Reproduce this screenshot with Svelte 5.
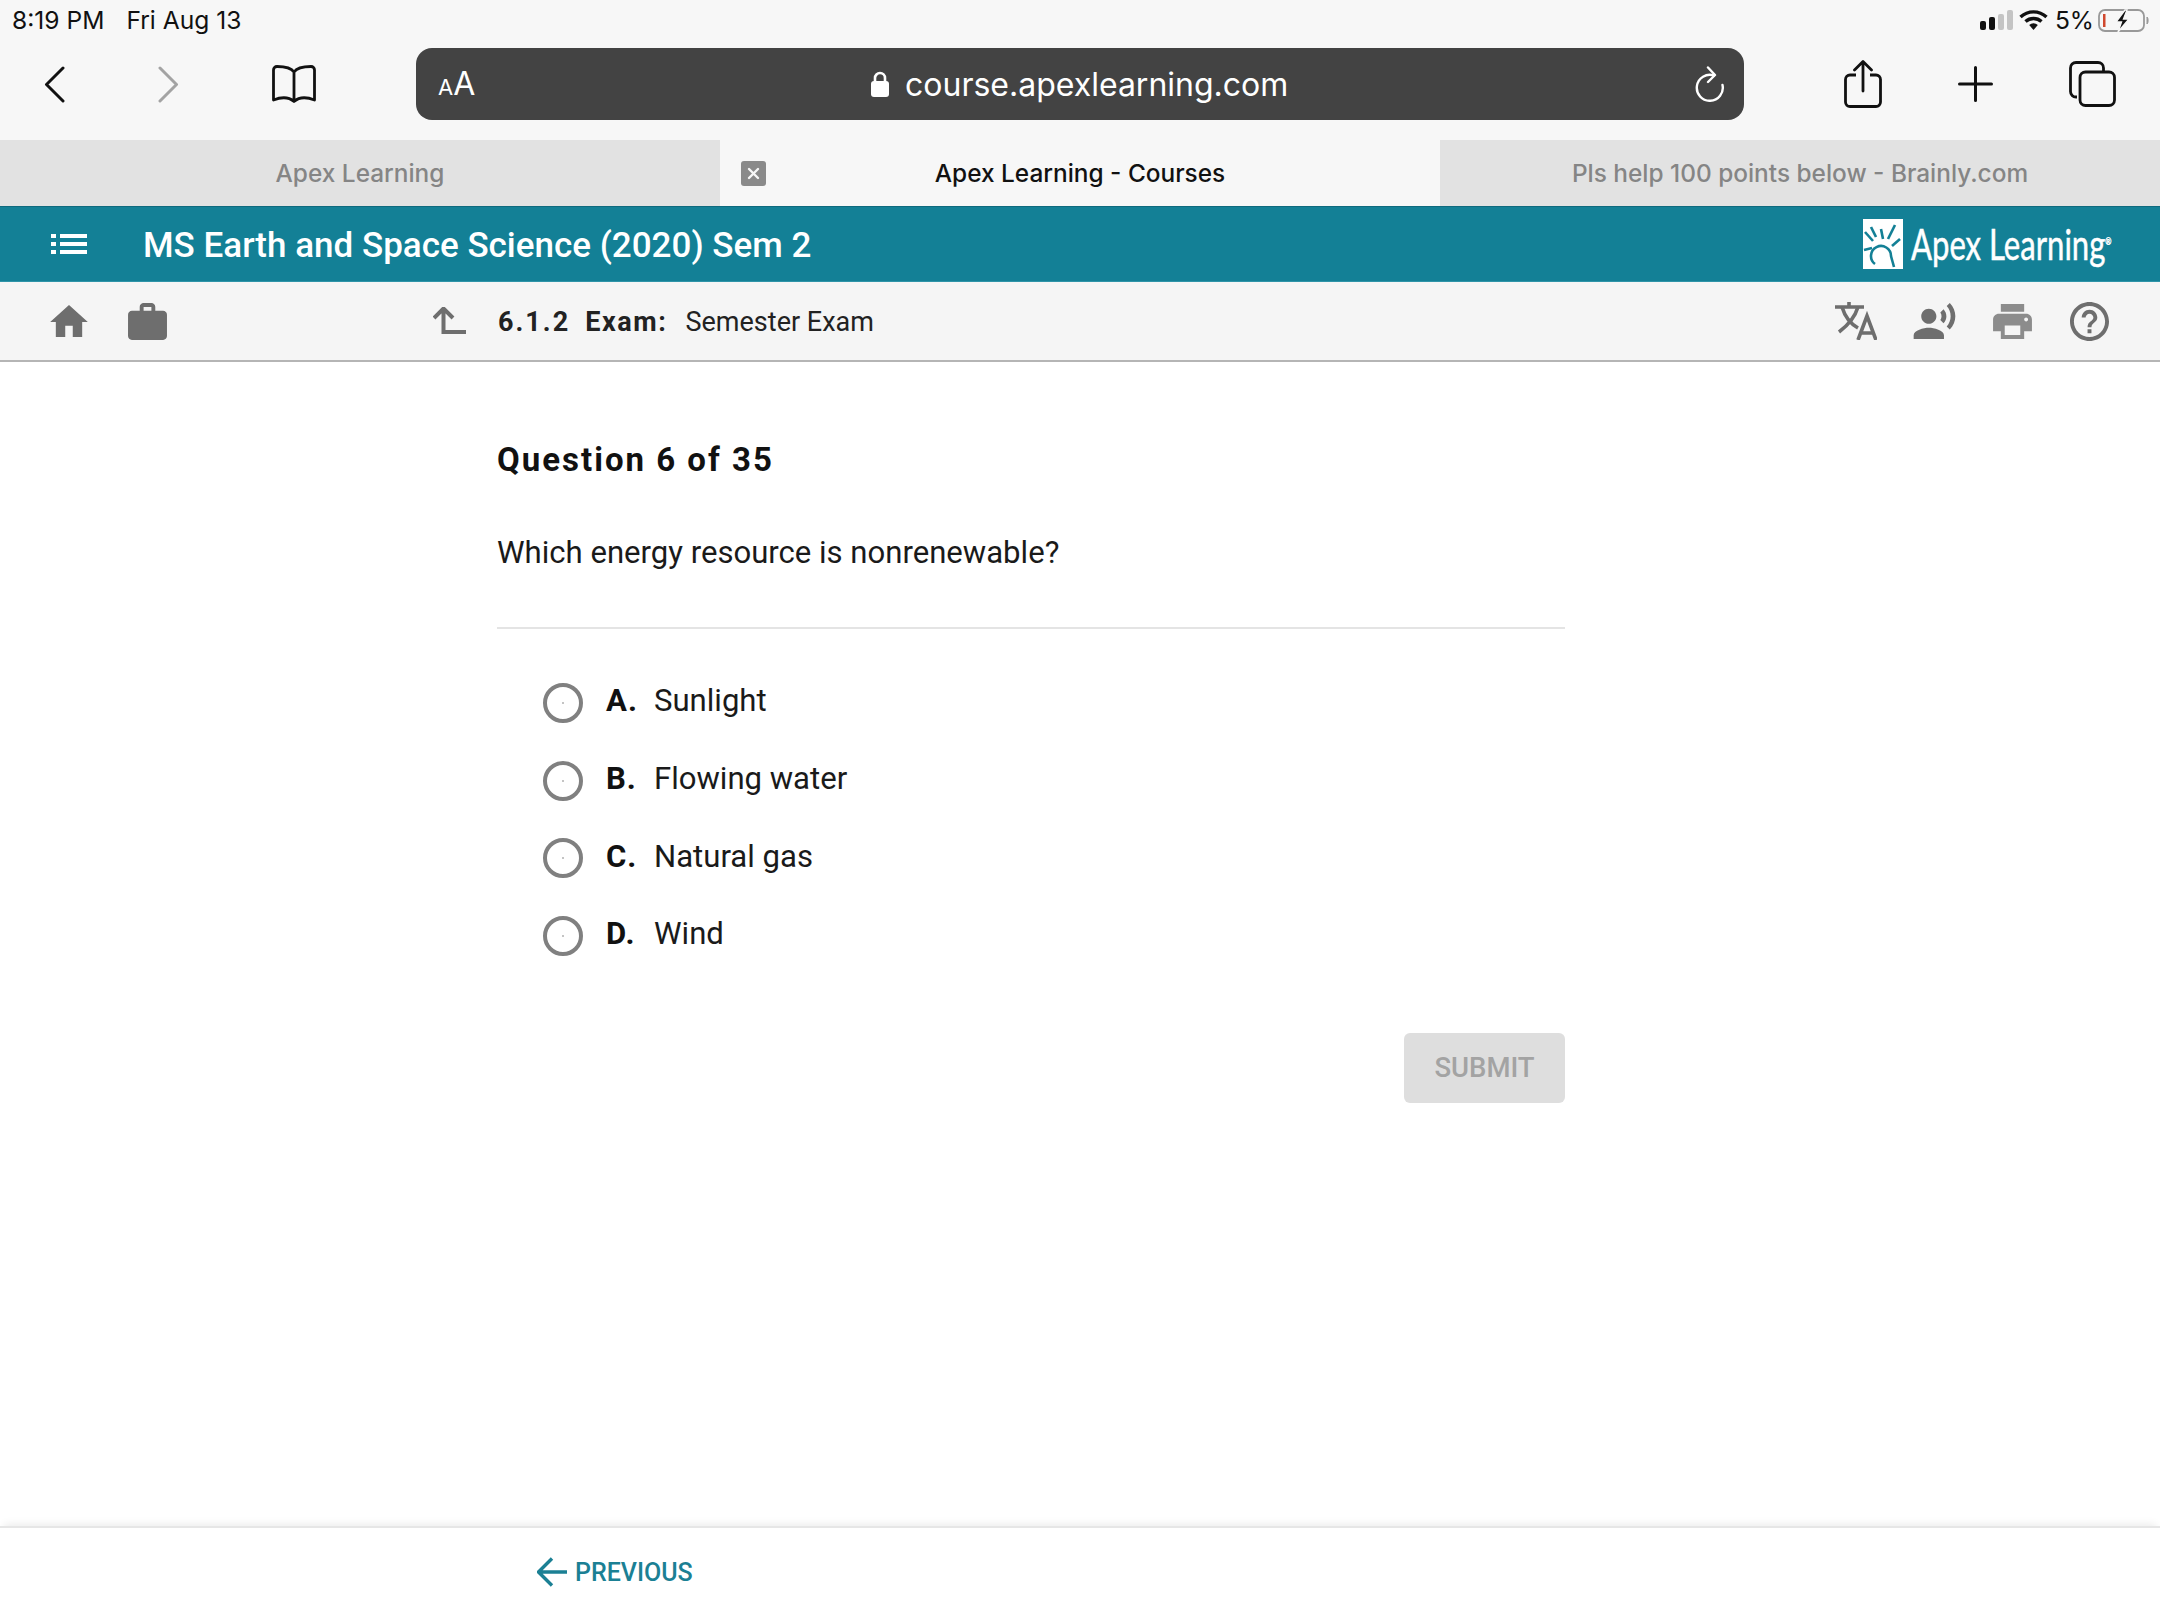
<script>
    const options = [
        { key: "A.", text: "Sunlight" },
        { key: "B.", text: "Flowing water" },
        { key: "C.", text: "Natural gas" },
        { key: "D.", text: "Wind" }
    ]
</script>

<div class="page">
    <div class="status">
        <span class="time">8:19 PM</span>
        <span class="date">Fri Aug 13</span>
        <svg class="signal" viewBox="0 0 33 20" width="33" height="20" aria-hidden="true">
            <rect x="0" y="11" width="6" height="9" rx="2" fill="#111" />
            <rect x="9" y="7" width="6" height="13" rx="2" fill="#111" />
            <rect x="18" y="4" width="6" height="16" rx="2" fill="#c4c4c4" />
            <rect x="27" y="0" width="6" height="20" rx="2" fill="#c4c4c4" />
        </svg>
        <svg class="wifi" viewBox="0 0 29 20" width="29" height="20" aria-hidden="true">
            <path d="M1.5 7 A19 19 0 0 1 27.5 7" fill="none" stroke="#111" stroke-width="3.4" />
            <path d="M6.5 11.5 A12 12 0 0 1 22.5 11.5" fill="none" stroke="#111" stroke-width="3.4" />
            <path d="M10.2 15 L14.5 20 L18.8 15 A6 6 0 0 0 10.2 15 Z" fill="#111" />
        </svg>
        <span class="pct">5%</span>
        <svg class="battery" viewBox="0 0 51 23" width="51" height="23" aria-hidden="true">
            <rect x="1" y="1" width="45" height="21" rx="6" fill="none" stroke="#999" stroke-width="1.8" />
            <rect x="5" y="5" width="2.5" height="13" fill="#d0492f" />
            <path d="M49 8 C50.5 9 50.5 14 49 15 Z" fill="#999" stroke="#999" />
            <path d="M27 1 L18 13 L23.5 13 L20 23 L31 10 L25.5 10 L29 1 Z" fill="#111" stroke="#f7f7f7" stroke-width="1.4" />
        </svg>
    </div>

    <div class="toolbar">
        <svg class="back" viewBox="0 0 21 37" width="21" height="37" aria-hidden="true">
            <path d="M19 2 L2.5 18.5 L19 35" fill="none" stroke="#111" stroke-width="3" stroke-linecap="round" stroke-linejoin="round" />
        </svg>
        <svg class="forward" viewBox="0 0 21 37" width="21" height="37" aria-hidden="true">
            <path d="M2 2 L18.5 18.5 L2 35" fill="none" stroke="#a3a3a3" stroke-width="3" stroke-linecap="round" stroke-linejoin="round" />
        </svg>
        <svg class="book" viewBox="0 0 44 38" width="44" height="38" aria-hidden="true">
            <path d="M22 7 C19 2.5 13 1.5 5 1.5 C3 1.5 1.5 3 1.5 5 L1.5 35 C9 32 17 32 22 36.5 C27 32 35 32 42.5 35 L42.5 5 C42.5 3 41 1.5 39 1.5 C31 1.5 25 2.5 22 7 Z M22 7 L22 36" fill="none" stroke="#111" stroke-width="2.8" stroke-linejoin="round" />
        </svg>
        <div class="url">
            <span class="aa"><span class="aa-small">A</span>A</span>
            <svg class="lock" viewBox="0 0 18 26" width="18" height="26" aria-hidden="true">
                <path d="M4 11 V7 A5 5 0 0 1 14 7 V11" fill="none" stroke="#fff" stroke-width="2.6" />
                <rect x="0" y="10" width="18" height="16" rx="3" fill="#fff" />
            </svg>
            <span class="host">course.apexlearning.com</span>
            <svg class="reload" viewBox="0 0 30 36" width="30" height="36" aria-hidden="true">
                <path d="M19 9.5 A13 13 0 1 0 27.5 19" fill="none" stroke="#fff" stroke-width="2.4" stroke-linecap="round" />
                <path d="M13 1.5 L20 9 L13 16" fill="none" stroke="#fff" stroke-width="2.4" stroke-linecap="round" stroke-linejoin="round" />
            </svg>
        </div>
        <svg class="share" viewBox="0 0 38 48" width="38" height="48" aria-hidden="true">
            <path d="M12 15 H6 A4.5 4.5 0 0 0 1.5 19.5 V42 A4.5 4.5 0 0 0 6 46.5 H32 A4.5 4.5 0 0 0 36.5 42 V19.5 A4.5 4.5 0 0 0 32 15 H26" fill="none" stroke="#111" stroke-width="2.8" />
            <path d="M19 31 V2 M10.5 10 L19 1.5 L27.5 10" fill="none" stroke="#111" stroke-width="2.8" stroke-linecap="round" stroke-linejoin="round" />
        </svg>
        <svg class="plus" viewBox="0 0 35 36" width="35" height="36" aria-hidden="true">
            <path d="M17.5 1.5 V34.5 M1.5 18 H33.5" fill="none" stroke="#111" stroke-width="3" stroke-linecap="round" />
        </svg>
        <svg class="tabs-icon" viewBox="0 0 47 46" width="47" height="46" aria-hidden="true">
            <path d="M8 36 H7 A5.5 5.5 0 0 1 1.5 30.5 V7 A5.5 5.5 0 0 1 7 1.5 H29 A5.5 5.5 0 0 1 34.5 7 V11" fill="none" stroke="#111" stroke-width="2.8" />
            <rect x="11" y="11" width="34.5" height="33.5" rx="5.5" fill="none" stroke="#111" stroke-width="2.8" />
        </svg>
    </div>

    <div class="tabs">
        <div class="tab">Apex Learning</div>
        <div class="tab active">
            <span class="tab-close">
                <svg viewBox="0 0 25 25" width="25" height="25" aria-hidden="true">
                    <path d="M8 8 L17 17 M17 8 L8 17" stroke="#f7f7f7" stroke-width="2.4" stroke-linecap="round" />
                </svg>
            </span>
            Apex Learning - Courses
        </div>
        <div class="tab">Pls help 100 points below - Brainly.com</div>
    </div>

    <header class="course-bar">
        <svg class="menu" viewBox="0 0 36 20" width="36" height="20" aria-hidden="true">
            <rect x="0" y="0" width="5" height="4" fill="#fff" />
            <rect x="0" y="8" width="5" height="4" fill="#fff" />
            <rect x="0" y="16" width="5" height="4" fill="#fff" />
            <rect x="9" y="0" width="27" height="4" fill="#fff" />
            <rect x="9" y="8" width="27" height="4" fill="#fff" />
            <rect x="9" y="16" width="27" height="4" fill="#fff" />
        </svg>
        <h1>MS Earth and Space Science (2020) Sem 2</h1>
        <svg class="logo-mark" viewBox="0 0 40 50" width="40" height="50" aria-hidden="true">
            <rect width="40" height="50" fill="#fff" />
            <g stroke="#138096" stroke-width="2.6" fill="none">
                <path d="M2 13 L10 22" />
                <path d="M1 31 L9 29" />
                <path d="M8 8 L13 18" />
                <path d="M18 10 L20 20" />
                <path d="M32 6 L25 20" />
                <path d="M37 20 L29 27" />
                <path d="M12 45 A10 10 0 1 1 28 37 C29 41 30 44 31 48" />
            </g>
        </svg>
        <span class="logo-text">Apex Learning<sup>®</sup></span>
    </header>

    <nav class="lesson-bar">
        <svg class="home" viewBox="2 3 20 17" width="38" height="32" aria-hidden="true">
            <path d="M10 20v-6h4v6h5v-8h3L12 3 2 12h3v8z" />
        </svg>
        <svg class="work" viewBox="2 2 20 19" width="39" height="37" aria-hidden="true">
            <path d="M20 6h-4V4c0-1.11-.89-2-2-2h-4c-1.11 0-2 .89-2 2v2H4c-1.11 0-1.99.89-1.99 2L2 19c0 1.11.89 2 2 2h16c1.11 0 2-.89 2-2V8c0-1.11-.89-2-2-2zm-6 0h-4V4h4v2z" />
        </svg>
        <svg class="up" viewBox="0 0 33 28" width="33" height="28" aria-hidden="true">
            <path d="M1 11 L10.5 1.5 L20 11 M10.5 2 V25 H33" fill="none" stroke="#6e6e6e" stroke-width="4" />
        </svg>
        <span class="lesson-num">6.1.2</span>
        <span class="lesson-type">Exam:</span>
        <span class="lesson-name">Semester Exam</span>
        <svg class="translate" viewBox="0 0 42 38" width="42" height="38" aria-hidden="true">
            <g fill="none" stroke="#6e6e6e" stroke-width="3.6">
                <path d="M0 5 H29 M14 0 V5" />
                <path d="M7 5 C10 15 16 22 23 26" />
                <path d="M23 5 C20 15 12 24 4 30" />
                <path d="M23 38 L32 14 L41 38 M26 31 H38" />
            </g>
        </svg>
        <svg class="voice" viewBox="1 2 22 19" width="43" height="36" aria-hidden="true">
            <path d="M9 13c2.21 0 4-1.79 4-4s-1.79-4-4-4-4 1.79-4 4 1.79 4 4 4zm0 2c-2.67 0-8 1.34-8 4v2h16v-2c0-2.66-5.33-4-8-4zm7.76-9.64l-1.68 1.69c.84 1.18.84 2.71 0 3.89l1.68 1.69c2.02-2.02 2.02-5.07 0-7.27zM20.07 2l-1.63 1.63c2.77 3.02 2.77 7.56 0 10.74L20.07 16c3.9-3.89 3.91-9.95 0-14z" />
        </svg>
        <svg class="print" viewBox="2 3 20 18" width="39" height="35" aria-hidden="true">
            <path d="M19 8H5c-1.66 0-3 1.34-3 3v6h4v4h12v-4h4v-6c0-1.66-1.34-3-3-3zm-3 11H8v-5h8v5zm3-7c-.55 0-1-.45-1-1s.45-1 1-1 1 .45 1 1-.45 1-1 1zm-1-9H6v4h12V3z" />
        </svg>
        <svg class="help" viewBox="2 2 20 20" width="39" height="39" aria-hidden="true">
            <path d="M11 18h2v-2h-2v2zm1-16C6.48 2 2 6.48 2 12s4.48 10 10 10 10-4.48 10-10S17.52 2 12 2zm0 18c-4.41 0-8-3.59-8-8s3.59-8 8-8 8 3.59 8 8-3.59 8-8 8zm0-14c-2.21 0-4 1.79-4 4h2c0-1.1.9-2 2-2s2 .9 2 2c0 2-3 1.75-3 5h2c0-2.25 3-2.5 3-5 0-2.21-1.79-4-4-4z" />
        </svg>
    </nav>

    <main class="question">
        <h2>Question 6 of 35</h2>
        <p class="prompt">Which energy resource is nonrenewable?</p>
        <ul class="options">
            {#each options as opt (opt.key)}
                <li>
                    <span class="radio"></span>
                    <strong>{opt.key}</strong>
                    <span class="opt-text">{opt.text}</span>
                </li>
            {/each}
        </ul>
        <div class="actions">
            <button type="button" disabled>SUBMIT</button>
        </div>
    </main>

    <footer class="pager">
        <svg viewBox="0 0 30 30" width="30" height="30" aria-hidden="true">
            <path d="M30 15 H2 M15 1.5 L1.5 15 L15 28.5" fill="none" stroke="#1b8094" stroke-width="3.4" />
        </svg>
        <span>PREVIOUS</span>
    </footer>
</div>

<style>
    :global(body) {
        margin: 0;
        background: #fff;
    }

    .page {
        display: flex;
        flex-direction: column;
        width: 2160px;
        height: 1620px;
        overflow: hidden;
        font-family: Roboto, "Liberation Sans", sans-serif;
        color: #1a1a1a;
    }

    /* safari chrome */
    .status {
        display: flex;
        align-items: center;
        box-sizing: border-box;
        height: 40px;
        padding: 0 11px 0 12px;
        background: #f7f7f7;
        font-family: Inter, "Liberation Sans", sans-serif;
        font-size: 24.6px;
        color: #111;
    }
    .date {
        margin-left: 22px;
    }
    .signal {
        margin-left: auto;
    }
    .wifi {
        margin-left: 6px;
    }
    .pct {
        margin-left: 7px;
    }
    .battery {
        margin-left: 4px;
    }

    .toolbar {
        display: flex;
        align-items: center;
        box-sizing: border-box;
        height: 100px;
        padding: 0 0 12px 44px;
        background: #f7f7f7;
    }
    .forward {
        margin-left: 93px;
    }
    .book {
        margin-left: 93px;
    }
    .url {
        display: flex;
        align-items: center;
        box-sizing: border-box;
        width: 1328px;
        height: 72px;
        margin-left: 100px;
        padding: 0 19px 0 22px;
        border-radius: 16px;
        background: #434343;
        color: #fff;
        font-family: Inter, "Liberation Sans", sans-serif;
    }
    .aa {
        width: 37px;
        font-size: 32px;
        line-height: 1;
    }
    .aa-small {
        font-size: 22px;
    }
    .lock {
        margin-left: 396px;
    }
    .host {
        margin-left: 16px;
        font-size: 32px;
    }
    .reload {
        margin-left: auto;
    }
    .share {
        margin-left: 100px;
    }
    .plus {
        margin-left: 76px;
    }
    .tabs-icon {
        margin-left: 76px;
    }

    .tabs {
        display: grid;
        grid-template-columns: repeat(3, 720px);
        height: 66px;
        font-family: Inter, "Liberation Sans", sans-serif;
        font-size: 24.4px;
        font-weight: 500;
    }
    .tab {
        position: relative;
        display: flex;
        align-items: center;
        justify-content: center;
        background: #e2e2e2;
        color: #858585;
    }
    .tab.active {
        background: #f7f7f7;
        color: #111;
    }
    .tab-close {
        position: absolute;
        left: 21px;
        top: 21px;
        display: flex;
        width: 25px;
        height: 25px;
        border-radius: 3px;
        background: #8a8a8a;
    }

    /* course header */
    .course-bar {
        display: flex;
        align-items: center;
        box-sizing: border-box;
        height: 76px;
        padding-left: 51px;
        background: #138096;
        border-top: 1px solid #0f6a7e;
        border-bottom: 1px solid #2f94a8;
        color: #fff;
    }
    .course-bar h1 {
        margin: 2px 0 0 56px;
        font-size: 35px;
        font-weight: 500;
    }
    .logo-mark {
        margin-left: auto;
    }
    .logo-text {
        width: 250px;
        margin: 0 -1px 0 8px;
        font-family: Lato, "Liberation Sans", sans-serif;
        font-size: 42px;
        white-space: nowrap;
        -webkit-text-stroke: 0.5px #fff;
        transform: scaleX(0.74);
        transform-origin: left center;
    }
    .logo-text sup {
        font-size: 10px;
    }

    .lesson-bar {
        display: flex;
        align-items: center;
        box-sizing: border-box;
        height: 80px;
        padding: 0 51px 0 50px;
        background: #f5f5f5;
        border-bottom: 2px solid #b5b5b5;
        font-size: 27px;
        color: #222;
    }
    .lesson-bar svg {
        fill: #6e6e6e;
        flex: none;
    }
    .lesson-bar span {
        margin-top: 1px;
    }
    .lesson-bar .print {
        fill: #8c8c8c;
    }
    .work {
        margin-left: 40px;
    }
    .up {
        margin-left: 266px;
    }
    .lesson-num {
        margin-left: 32px;
        font-weight: 700;
        letter-spacing: 2px;
    }
    .lesson-type {
        margin-left: 15px;
        font-weight: 700;
        letter-spacing: 1.6px;
    }
    .lesson-name {
        margin-left: 18px;
    }
    .translate {
        margin-left: auto;
    }
    .voice {
        margin-left: 36px;
    }
    .print {
        margin-left: 37px;
    }
    .help {
        margin-left: 38px;
    }

    /* question body */
    .question {
        flex: 1;
        box-sizing: border-box;
        width: 1068px;
        margin-left: 497px;
        padding-top: 77px;
    }
    h2 {
        margin: 0;
        font-size: 33px;
        line-height: 42px;
        font-weight: 700;
        letter-spacing: 2px;
        color: #111;
    }
    .prompt {
        margin: 51px 0 0;
        padding-bottom: 53px;
        border-bottom: 2px solid #e4e4e4;
        font-size: 31.1px;
        line-height: 42px;
    }
    .options {
        margin: 33px 0 0;
        padding: 0 0 0 46px;
        list-style: none;
    }
    .options li {
        display: flex;
        align-items: center;
        height: 77.7px;
        font-size: 31.1px;
    }
    .radio {
        box-sizing: border-box;
        width: 40px;
        height: 40px;
        margin-top: 4px;
        border: 4px solid #808080;
        border-radius: 50%;
        background: radial-gradient(circle, #c4c4c4 1px, #fff 1.5px);
    }
    .options strong {
        width: 48px;
        margin-left: 23px;
        color: #111;
        letter-spacing: 1px;
    }
    .actions {
        display: flex;
        justify-content: flex-end;
        margin-top: 60px;
    }
    button {
        width: 161px;
        height: 70px;
        padding: 0;
        border: none;
        border-radius: 6px;
        background: #dedede;
        color: #a3a3a3;
        font-family: inherit;
        font-size: 27.5px;
        font-weight: 500;
    }

    .pager {
        display: flex;
        align-items: center;
        box-sizing: border-box;
        height: 94px;
        padding: 0 0 4px 537px;
        border-top: 2px solid #e6e6e6;
        box-shadow: 0 -6px 8px -4px rgba(0, 0, 0, 0.08);
        color: #1b8094;
        font-size: 25px;
        font-weight: 500;
    }
    .pager span {
        margin-left: 8px;
    }
</style>
